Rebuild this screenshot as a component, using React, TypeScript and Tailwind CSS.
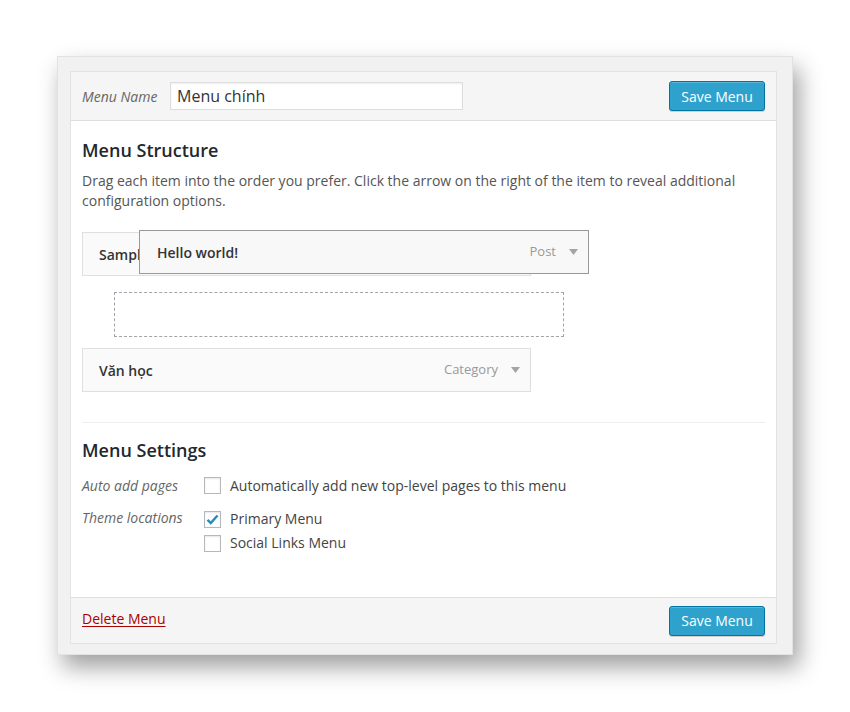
import React from "react";

function Arrow() {
  return (
    <svg width="9" height="6" viewBox="0 0 9 6" className="ml-[13px]">
      <path d="M0 0 L9 0 L4.5 6 Z" fill="#a0a5aa" />
    </svg>
  );
}

function Checkbox({ checked }: { checked?: boolean }) {
  return (
    <span className="w-[17px] h-[17px] border border-[#b4b9be] bg-white shadow-[inset_0_1px_2px_rgba(0,0,0,0.1)] flex items-center justify-center shrink-0">
      {checked && (
        <svg width="13" height="11" viewBox="0 0 13 11">
          <path d="M1.5 5.8 L4.8 9 L11.5 1.5" fill="none" stroke="#1e8cbe" strokeWidth="2.4" />
        </svg>
      )}
    </span>
  );
}

function SaveButton() {
  return (
    <button className="w-[96px] h-[30px] rounded-[3px] bg-[#2ea2cc] border border-[#0074a2] text-white text-[14px] shadow-[inset_0_1px_0_rgba(120,200,230,0.5),0_1px_0_rgba(0,0,0,0.15)]">
      Save Menu
    </button>
  );
}

export default function App() {
  return (
    <div
      className="w-[850px] h-[712px] bg-white pt-[56px] pl-[57px]"
      style={{ fontFamily: '"Open Sans", "Noto Sans", sans-serif' }}
    >
      <div className="w-[736px] h-[599px] bg-[#f1f1f1] border border-[#e2e2e2] shadow-[6px_12px_22px_rgba(0,0,0,0.38)] pt-[14px] pl-[12px]">
        <div className="w-[707px] h-[573px] border border-[#e3e3e3] bg-white flex flex-col">
          {/* header */}
          <div className="h-[49px] bg-[#f5f5f5] border-b border-[#dfdfdf] flex items-center justify-between pl-[11px] pr-[11px] shrink-0">
            <div className="flex items-center">
              <span className="italic text-[14px] text-[#666] w-[88px]">Menu Name</span>
              <div className="w-[293px] h-[28px] border border-[#dddddd] bg-white flex items-center px-[6px] text-[16px] text-[#333] shadow-[inset_0_1px_2px_rgba(0,0,0,0.07)]">
                Menu chính
              </div>
            </div>
            <SaveButton />
          </div>

          {/* body */}
          <div className="flex-1 px-[11px] text-[#444]">
            <h3 className="mt-[17px] text-[18px] leading-[24px] font-semibold text-[#23282d]">Menu Structure</h3>
            <p className="mt-[9px] text-[14px] leading-[20px] text-[#555] pr-[10px]">
              Drag each item into the order you prefer. Click the arrow on the right of the item to reveal additional configuration options.
            </p>

            <div className="relative mt-[21px]">
              <div className="w-[449px] h-[44px] border border-[#dfdfdf] bg-[#fafafa] flex items-center px-[16px] overflow-hidden">
                <span className="text-[14px] font-semibold text-[#333]">Sample</span>
              </div>
              <div className="absolute left-[57px] top-[-2px] w-[450px] h-[44px] border border-[#999] bg-[#f8f8f8] flex items-center justify-between pl-[17px] pr-[10px]">
                <span className="text-[14px] font-semibold text-[#333]">Hello world!</span>
                <span className="flex items-center text-[13px] text-[#999]">
                  Post
                  <Arrow />
                </span>
              </div>

              <div className="ml-[32px] mt-[16px] w-[450px] h-[45px] border border-dashed border-[#a0a5aa]" />

              <div className="mt-[11px] w-[449px] h-[44px] border border-[#dfdfdf] bg-[#fafafa] flex items-center justify-between pl-[16px] pr-[10px]">
                <span className="text-[14px] font-semibold text-[#333]">Văn học</span>
                <span className="flex items-center text-[13px] text-[#999]">
                  Category
                  <Arrow />
                </span>
              </div>
            </div>

            <div className="mt-[30px] border-t border-[#eeeeee]" />

            <h3 className="mt-[15px] text-[18px] leading-[24px] font-semibold text-[#23282d]">Menu Settings</h3>

            <div className="mt-[13px] flex items-center">
              <span className="w-[122px] italic text-[14px] text-[#666]">Auto add pages</span>
              <label className="flex items-center gap-[9px] text-[14px] text-[#444]">
                <Checkbox />
                Automatically add new top-level pages to this menu
              </label>
            </div>

            <div className="mt-[14px] flex items-start">
              <span className="w-[122px] italic text-[14px] text-[#666] leading-[20px] mt-[-2px]">Theme locations</span>
              <div className="flex flex-col gap-[6px]">
                <label className="flex items-center gap-[9px] text-[14px] text-[#444] leading-[18px]">
                  <Checkbox checked />
                  Primary Menu
                </label>
                <label className="flex items-center gap-[9px] text-[14px] text-[#444] leading-[18px]">
                  <Checkbox />
                  Social Links Menu
                </label>
              </div>
            </div>
          </div>

          {/* footer */}
          <div className="h-[46px] bg-[#f5f5f5] border-t border-[#dfdfdf] flex items-center justify-between pl-[11px] pr-[11px] shrink-0">
            <a className="text-[14px] text-[#a00] underline underline-offset-2 mb-[5px]">Delete Menu</a>
            <SaveButton />
          </div>
        </div>
      </div>
    </div>
  );
}
